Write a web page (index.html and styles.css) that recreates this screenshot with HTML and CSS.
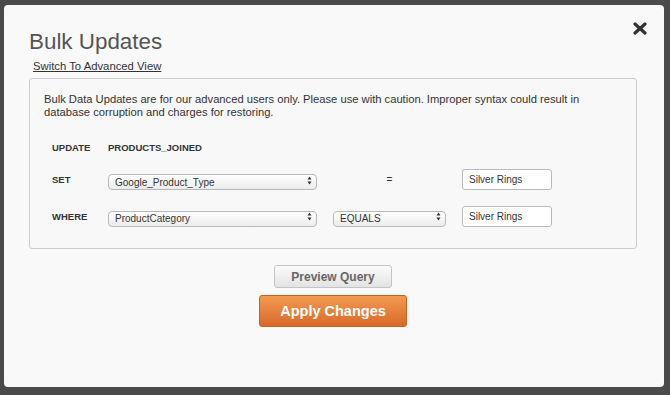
FILE: index.html
```html
<!DOCTYPE html>
<html lang="en">
<head>
    <meta charset="UTF-8">
    <meta name="viewport" content="width=device-width, initial-scale=1.0">
    <title>Bulk Updates</title>
    <link rel="stylesheet" href="styles.css">
</head>
<body>
    <div class="modal">
        <div class="modal-header">
            <div>
                <h1>Bulk Updates</h1>
                <a href="#" class="switch-link">Switch To Advanced View</a>
            </div>
            <button class="close" type="button" aria-label="Close">
                <svg viewBox="0 0 14 13" width="14" height="13">
                    <path d="M2 2 L12 11 M12 2 L2 11" stroke="#333" stroke-width="3.2" stroke-linecap="round"/>
                </svg>
            </button>
        </div>

        <div class="panel">
            <p class="warning">Bulk Data Updates are for our advanced users only. Please use with caution. Improper syntax could result in database corruption and charges for restoring.</p>

            <div class="query-grid">
                <span class="label">UPDATE</span>
                <span class="label table-name">PRODUCTS_JOINED</span>

                <span class="label">SET</span>
                <div class="select-wrap">
                    <select>
                        <option>Google_Product_Type</option>
                    </select>
                    <svg class="arrows" viewBox="0 0 5 9" width="5" height="9">
                        <path d="M0.5 3.5 L2.5 0.5 L4.5 3.5 Z M0.5 5.5 L2.5 8.5 L4.5 5.5 Z" fill="#333"/>
                    </svg>
                </div>
                <span class="equals">=</span>
                <input type="text" value="Silver Rings">

                <span class="label">WHERE</span>
                <div class="select-wrap">
                    <select>
                        <option>ProductCategory</option>
                    </select>
                    <svg class="arrows" viewBox="0 0 5 9" width="5" height="9">
                        <path d="M0.5 3.5 L2.5 0.5 L4.5 3.5 Z M0.5 5.5 L2.5 8.5 L4.5 5.5 Z" fill="#333"/>
                    </svg>
                </div>
                <div class="select-wrap">
                    <select>
                        <option>EQUALS</option>
                    </select>
                    <svg class="arrows" viewBox="0 0 5 9" width="5" height="9">
                        <path d="M0.5 3.5 L2.5 0.5 L4.5 3.5 Z M0.5 5.5 L2.5 8.5 L4.5 5.5 Z" fill="#333"/>
                    </svg>
                </div>
                <input type="text" value="Silver Rings">
            </div>
        </div>

        <div class="actions">
            <button type="button" class="btn-preview">Preview Query</button>
            <button type="button" class="btn-apply">Apply Changes</button>
        </div>
    </div>
</body>
</html>
```

FILE: styles.css
```css
/* General Styles */
:root {
    --page-bg: #4a4a4a;
    --modal-bg: #f9f9f9;
    --text-color: #333;
    --title-color: #555;
    --border-color: #ccc;
}

body {
    margin: 0;
    padding: 5px 6px 8px 4px;
    background-color: var(--page-bg);
    font-family: "Liberation Sans", Arial, sans-serif;
    color: var(--text-color);
}

.modal {
    height: 382px;
    box-sizing: border-box;
    background-color: var(--modal-bg);
    border-radius: 4px;
    padding: 24px 27px 0 25px;
}

/* Header */
.modal-header {
    display: flex;
    justify-content: space-between;
    align-items: flex-start;
}

h1 {
    margin: 0;
    font-size: 22.4px;
    line-height: 26px;
    font-weight: normal;
    color: var(--title-color);
}

.switch-link {
    display: inline-block;
    margin: 5px 0 0 4px;
    font-size: 11.3px;
    line-height: 13px;
    color: var(--text-color);
    text-decoration: underline;
}

.close {
    margin: -7px -10px 0 0;
    padding: 0;
    border: none;
    background: none;
    cursor: pointer;
    display: flex;
}

/* Panel */
.panel {
    margin-top: 4px;
    height: 171px;
    box-sizing: border-box;
    border: 1px solid var(--border-color);
    border-radius: 3px;
    background-color: #f8f8f8;
    padding: 14px 15px 0 14px;
}

.warning {
    margin: 0;
    max-width: 560px;
    font-size: 11.2px;
    line-height: 13px;
}

.query-grid {
    display: grid;
    grid-template-columns: 40px 209px 113px 90px;
    grid-template-rows: 12px 21px 21px;
    column-gap: 16px;
    row-gap: 15.5px;
    align-items: center;
    margin: 22.5px 0 0 8px;
}

.label {
    font-size: 9.5px;
    font-weight: bold;
}

.table-name {
    grid-column: span 3;
}

.equals {
    text-align: center;
    font-size: 10px;
}

.select-wrap {
    position: relative;
    height: 16px;
}

select {
    appearance: none;
    width: 100%;
    height: 16px;
    box-sizing: border-box;
    border: 1px solid #b8b8b8;
    border-radius: 4px;
    background: linear-gradient(#ffffff, #ececec);
    font-family: inherit;
    font-size: 10px;
    color: var(--text-color);
    padding: 0 0 0 6px;
}

.arrows {
    position: absolute;
    right: 5px;
    top: 4px;
}

input[type="text"] {
    width: 100%;
    height: 21px;
    box-sizing: border-box;
    border: 1px solid #bbb;
    border-radius: 3px;
    background-color: #fff;
    font-family: inherit;
    font-size: 10px;
    color: var(--text-color);
    padding: 0 0 0 6px;
}

/* Buttons */
.actions {
    display: flex;
    flex-direction: column;
    align-items: center;
    gap: 7px;
    margin: 16px 0 0 0;
}

.btn-preview {
    width: 118px;
    height: 23px;
    border: 1px solid #c4c4c4;
    border-radius: 3px;
    background: linear-gradient(#fbfbfb, #e3e3e3);
    font-family: inherit;
    font-size: 12px;
    font-weight: bold;
    color: #666;
    cursor: pointer;
}

.btn-apply {
    width: 148px;
    height: 32px;
    border: 1px solid #c9621f;
    border-radius: 3px;
    background: linear-gradient(#f29a52, #d8692a);
    font-family: inherit;
    font-size: 14.5px;
    font-weight: bold;
    color: #fff;
    cursor: pointer;
}
```
